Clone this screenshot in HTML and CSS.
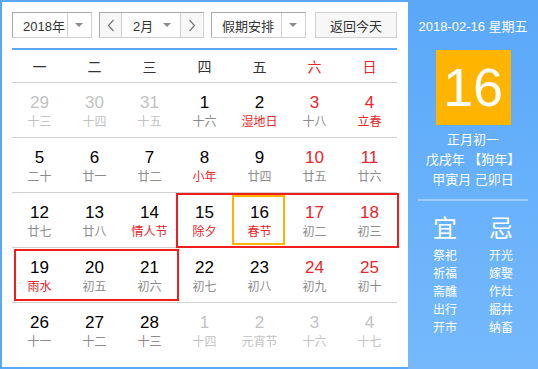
FILE: index.html
```html
<!DOCTYPE html>
<html>
<head>
    <title> 万年历 </title>
    <link rel="stylesheet" href="styles.css">
</head>
<body>
    <div class="app">
        <div class="main">
            <div class="toolbar">
                <div class="select year">
                    <span class="select-text">2018年</span>
                    <span class="select-arrow"><i class="caret"></i></span>
                </div>
                <div class="select month">
                    <span class="nav-btn">
                        <svg width="8" height="13" viewBox="0 0 8 13"><polyline points="6.5,1 1.5,6.5 6.5,12" fill="none" stroke="#777" stroke-width="1.2"/></svg>
                    </span>
                    <span class="month-mid">
                        <span class="month-text">2月</span>
                        <i class="caret"></i>
                    </span>
                    <span class="nav-btn">
                        <svg width="8" height="13" viewBox="0 0 8 13"><polyline points="1.5,1 6.5,6.5 1.5,12" fill="none" stroke="#777" stroke-width="1.2"/></svg>
                    </span>
                </div>
                <div class="select holiday">
                    <span class="select-text">假期安排</span>
                    <span class="select-arrow"><i class="caret"></i></span>
                </div>
                <button class="today-btn" type="button">返回今天</button>
            </div>

            <div class="week-head">
                <span>一</span><span>二</span><span>三</span><span>四</span><span>五</span>
                <span class="weekend">六</span><span class="weekend">日</span>
            </div>

            <div class="days">
                <div class="day other"><b>29</b><em>十三</em></div>
                <div class="day other"><b>30</b><em>十四</em></div>
                <div class="day other"><b>31</b><em>十五</em></div>
                <div class="day"><b>1</b><em>十六</em></div>
                <div class="day"><b>2</b><em class="fest">湿地日</em></div>
                <div class="day red"><b>3</b><em>十八</em></div>
                <div class="day red"><b>4</b><em class="fest">立春</em></div>

                <div class="day"><b>5</b><em>二十</em></div>
                <div class="day"><b>6</b><em>廿一</em></div>
                <div class="day"><b>7</b><em>廿二</em></div>
                <div class="day"><b>8</b><em class="fest">小年</em></div>
                <div class="day"><b>9</b><em>廿四</em></div>
                <div class="day red"><b>10</b><em>廿五</em></div>
                <div class="day red"><b>11</b><em>廿六</em></div>

                <div class="day"><b>12</b><em>廿七</em></div>
                <div class="day"><b>13</b><em>廿八</em></div>
                <div class="day"><b>14</b><em class="fest">情人节</em></div>
                <div class="day"><b>15</b><em class="fest">除夕</em></div>
                <div class="day selected"><b>16</b><em class="fest">春节</em></div>
                <div class="day red"><b>17</b><em>初二</em></div>
                <div class="day red"><b>18</b><em>初三</em></div>

                <div class="day"><b>19</b><em class="fest">雨水</em></div>
                <div class="day"><b>20</b><em>初五</em></div>
                <div class="day"><b>21</b><em>初六</em></div>
                <div class="day"><b>22</b><em>初七</em></div>
                <div class="day"><b>23</b><em>初八</em></div>
                <div class="day red"><b>24</b><em>初九</em></div>
                <div class="day red"><b>25</b><em>初十</em></div>

                <div class="day"><b>26</b><em>十一</em></div>
                <div class="day"><b>27</b><em>十二</em></div>
                <div class="day"><b>28</b><em>十三</em></div>
                <div class="day other"><b>1</b><em>十四</em></div>
                <div class="day other"><b>2</b><em>元宵节</em></div>
                <div class="day other"><b>3</b><em>十六</em></div>
                <div class="day other"><b>4</b><em>十七</em></div>

                <!-- 春节假期范围 -->
                <div class="holiday-box box-one"></div>
                <div class="holiday-box box-two"></div>
            </div>
        </div>

        <div class="side">
            <div class="side-date">2018-02-16 星期五</div>
            <div class="big-day">16</div>
            <div class="lunar">
                <div>正月初一</div>
                <div>戊戌年 【狗年】</div>
                <div>甲寅月 己卯日</div>
            </div>
            <div class="side-line"></div>
            <div class="yiji">
                <div class="yiji-col">
                    <div class="yiji-title">宜</div>
                    <div>祭祀</div><div>祈福</div><div>斋醮</div><div>出行</div><div>开市</div>
                </div>
                <div class="yiji-col">
                    <div class="yiji-title">忌</div>
                    <div>开光</div><div>嫁娶</div><div>作灶</div><div>掘井</div><div>纳畜</div>
                </div>
            </div>
        </div>
    </div>
</body>
</html>
```

FILE: styles.css
```css
body {
    margin: 0;
    font-family: "Liberation Sans", "Noto Sans CJK SC", sans-serif;
    background-color: #fff;
}

.app {
    width: 538px;
    height: 369px;
    box-sizing: border-box;
    border: 2px solid #5ba8f8;
    border-right: none;
    display: flex;
    background-color: #fff;
}

.main {
    width: 406px;
    box-sizing: border-box;
    padding: 10px 10px 0 10px;
}

/* barra de controles */
.toolbar {
    display: flex;
    height: 26px;
    padding-bottom: 10px;
    border-bottom: 2px solid #5ba8f8;
    width: 385px;
}

.select {
    display: flex;
    box-sizing: border-box;
    height: 26px;
    border: 1px solid #d0d0d0;
    border-color: #a8a8a8 #d0d0d0 #d0d0d0 #a8a8a8;
    font-size: 13px;
    color: #333;
    background-color: #fff;
}

.select-text {
    display: flex;
    align-items: center;
    padding-left: 10px;
    box-sizing: border-box;
}

.select-arrow {
    display: flex;
    align-items: center;
    justify-content: center;
    width: 24px;
    border-left: 1px solid #d0d0d0;
}

.caret {
    display: block;
    width: 0;
    height: 0;
    border-left: 4px solid transparent;
    border-right: 4px solid transparent;
    border-top: 4px solid #8a8a8a;
}

.year {
    width: 80px;
}

.year .select-text {
    width: 55px;
}

.month {
    width: 105px;
    margin-left: 7px;
}

.nav-btn {
    display: flex;
    align-items: center;
    justify-content: center;
    width: 21px;
    background-color: #f7f7f7;
}

.month-mid {
    display: flex;
    align-items: center;
    justify-content: space-between;
    width: 60px;
    box-sizing: border-box;
    padding: 0 9px 0 11px;
    border-left: 1px solid #d0d0d0;
    border-right: 1px solid #d0d0d0;
}

.holiday {
    width: 95px;
    margin-left: 7px;
}

.holiday .select-text {
    width: 70px;
}

.today-btn {
    width: 82px;
    height: 26px;
    margin-left: 9px;
    border: 1px solid #d0d0d0;
    background-color: #f7f7f7;
    font-family: inherit;
    font-size: 13px;
    color: #333;
    padding: 0;
    border-radius: 0;
}

/* cabecera de semana */
.week-head {
    display: grid;
    grid-template-columns: repeat(7, 55px);
    height: 32px;
    align-items: center;
    text-align: center;
    font-size: 14px;
    color: #333;
}

.week-head .weekend {
    color: #e8262a;
}

/* dias */
.days {
    position: relative;
    display: grid;
    grid-template-columns: repeat(7, 55px);
    grid-auto-rows: 55px;
    width: 385px;
}

.day {
    position: relative;
    box-sizing: border-box;
    border-top: 1px solid #cfcfcf;
    padding-top: 11px;
    text-align: center;
}

.day b {
    display: block;
    font-weight: normal;
    font-size: 17px;
    line-height: 18px;
    color: #000;
}

.day em {
    display: block;
    font-style: normal;
    font-size: 12px;
    line-height: 16px;
    margin-top: 2px;
    color: #8c8c8c;
}

.day.red b {
    color: #e8262a;
}

.day em.fest {
    color: #e8262a;
}

.day.other b,
.day.other em {
    color: #c2c2c2;
}

.day.selected::after {
    content: "";
    position: absolute;
    top: 2px;
    left: 0;
    width: 53px;
    height: 50px;
    box-sizing: border-box;
    border: 2px solid #ffb400;
}

.holiday-box {
    position: absolute;
    box-sizing: border-box;
    border: 2px solid #f21c1c;
}

.box-one {
    left: 164px;
    top: 111px;
    width: 223px;
    height: 55px;
}

.box-two {
    left: 2px;
    top: 167px;
    width: 165px;
    height: 52px;
}

/* panel lateral */
.side {
    flex: 1;
    background: linear-gradient(#5aa8f9, #75b9fc);
    color: #fff;
    text-align: center;
    margin-top: -2px;
    margin-bottom: -2px;
    padding-top: 18px;
}

.side-date {
    font-size: 13px;
    line-height: 18px;
}

.big-day {
    width: 75px;
    height: 75px;
    margin: 14px auto 0 auto;
    background-color: #ffb400;
    font-size: 54px;
    line-height: 75px;
}

.lunar {
    margin-top: 5px;
    font-size: 13px;
    line-height: 20px;
}

.side-line {
    width: 110px;
    height: 2px;
    margin: 9px auto 0 auto;
    background-color: rgba(255, 255, 255, 0.35);
}

.yiji {
    display: flex;
    justify-content: center;
    margin-top: 14px;
    font-size: 12px;
    line-height: 18px;
}

.yiji-col {
    width: 56px;
}

.yiji-title {
    font-size: 24px;
    line-height: 28px;
    margin-bottom: 4px;
}
```
